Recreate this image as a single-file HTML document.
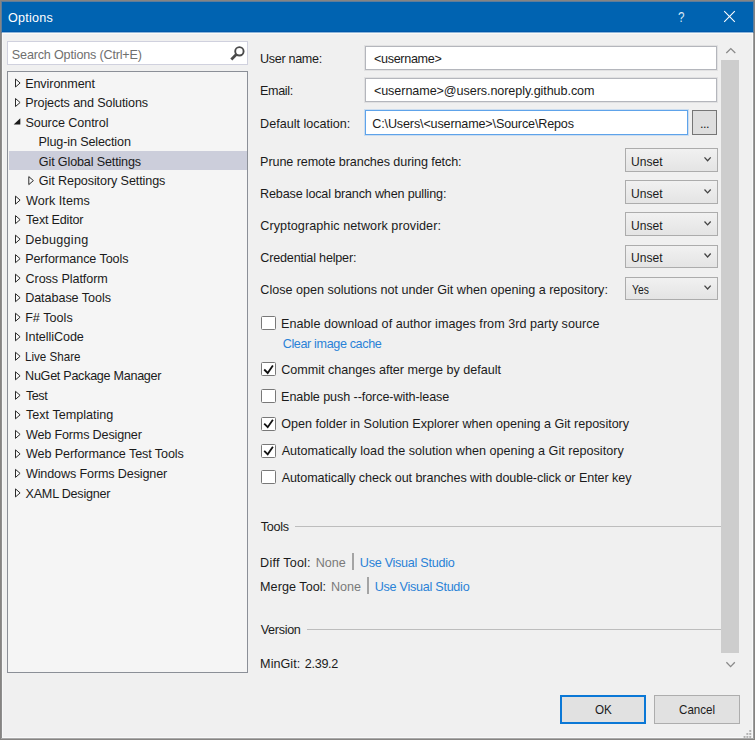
<!DOCTYPE html>
<html lang="en"><head><meta charset="utf-8"><title>Options</title>
<style>

html,body{margin:0;padding:0;}
body{width:755px;height:740px;overflow:hidden;background:#f0f0f0;position:relative;
 font-family:"Liberation Sans",Arial,sans-serif;}
.abs,.t{position:absolute;}
.t{white-space:pre;display:block;}
.win{left:0;top:0;width:755px;height:740px;box-sizing:border-box;}
.b{position:absolute;box-sizing:border-box;}
svg{position:absolute;overflow:visible;}

</style></head><body>
<div class="b" style="left:0;top:0;width:755px;height:740px;background:#868482"></div>
<div class="b" style="left:1px;top:1px;width:753px;height:738px;background:#8e8e8e"></div>
<div class="b" style="left:2px;top:2px;width:751px;height:736px;background:#f8f8f8"></div>
<div class="b" style="left:3px;top:2px;width:749px;height:735px;background:#f0f0f0"></div>
<div class="b" style="left:1px;top:738px;width:753px;height:1px;background:#a9a9a9"></div>
<div class="b" style="left:753px;top:33px;width:1px;height:705px;background:#9c9c9c"></div>
<div class="b" style="left:1px;top:1px;width:753px;height:32px;background:#5f7d9b"></div>
<div class="b" style="left:2px;top:2px;width:751px;height:29px;background:#0063b1"></div>
<div class="b" style="left:2px;top:31px;width:751px;height:1px;background:#0058aa"></div>
<div class="b" style="left:2px;top:32px;width:751px;height:1px;background:#8db6db"></div>
<div class="b" style="left:2px;top:33px;width:751px;height:1px;background:#fcf9f6"></div>
<svg style="left:724px;top:11px" width="11" height="11" viewBox="0 0 11 11"><path d="M0.2 0.2 L10.8 10.8 M10.8 0.2 L0.2 10.8" stroke="#fff" stroke-width="1.05" fill="none"/></svg>
<div class="b" style="left:7px;top:41px;width:241px;height:24px;background:#fff;border:1px solid #d0d1de"></div>
<svg style="left:229px;top:45px" width="17" height="17" viewBox="0 0 17 17"><circle cx="10.4" cy="6.3" r="4.2" fill="none" stroke="#4a4a4a" stroke-width="1.9"/><path d="M7.5 9.3 L2.3 14.5" stroke="#4a4a4a" stroke-width="2.8" fill="none" stroke-linecap="butt"/></svg>
<div class="b" style="left:7px;top:71px;width:241px;height:602px;background:#f5f5f5;border:1px solid #8b8f97"></div>
<div class="b" style="left:9px;top:151px;width:238px;height:19px;background:#cccedb"></div>
<svg style="left:0;top:0" width="755" height="740"><path d="M15.50 79.00 L20.10 83.00 L15.50 87.00 Z" fill="#fbfbfb" stroke="#2b2b2b" stroke-width="1"/></svg>
<svg style="left:0;top:0" width="755" height="740"><path d="M15.50 98.52 L20.10 102.52 L15.50 106.52 Z" fill="#fbfbfb" stroke="#2b2b2b" stroke-width="1"/></svg>
<svg style="left:0;top:0" width="755" height="740"><path d="M20.30 118.14 L20.30 124.54 L13.70 124.54 Z" fill="#1b1b1b"/></svg>
<svg style="left:0;top:0" width="755" height="740"><path d="M28.80 176.60 L33.40 180.60 L28.80 184.60 Z" fill="#fbfbfb" stroke="#2b2b2b" stroke-width="1"/></svg>
<svg style="left:0;top:0" width="755" height="740"><path d="M15.50 196.12 L20.10 200.12 L15.50 204.12 Z" fill="#fbfbfb" stroke="#2b2b2b" stroke-width="1"/></svg>
<svg style="left:0;top:0" width="755" height="740"><path d="M15.50 215.64 L20.10 219.64 L15.50 223.64 Z" fill="#fbfbfb" stroke="#2b2b2b" stroke-width="1"/></svg>
<svg style="left:0;top:0" width="755" height="740"><path d="M15.50 235.16 L20.10 239.16 L15.50 243.16 Z" fill="#fbfbfb" stroke="#2b2b2b" stroke-width="1"/></svg>
<svg style="left:0;top:0" width="755" height="740"><path d="M15.50 254.68 L20.10 258.68 L15.50 262.68 Z" fill="#fbfbfb" stroke="#2b2b2b" stroke-width="1"/></svg>
<svg style="left:0;top:0" width="755" height="740"><path d="M15.50 274.20 L20.10 278.20 L15.50 282.20 Z" fill="#fbfbfb" stroke="#2b2b2b" stroke-width="1"/></svg>
<svg style="left:0;top:0" width="755" height="740"><path d="M15.50 293.72 L20.10 297.72 L15.50 301.72 Z" fill="#fbfbfb" stroke="#2b2b2b" stroke-width="1"/></svg>
<svg style="left:0;top:0" width="755" height="740"><path d="M15.50 313.24 L20.10 317.24 L15.50 321.24 Z" fill="#fbfbfb" stroke="#2b2b2b" stroke-width="1"/></svg>
<svg style="left:0;top:0" width="755" height="740"><path d="M15.50 332.76 L20.10 336.76 L15.50 340.76 Z" fill="#fbfbfb" stroke="#2b2b2b" stroke-width="1"/></svg>
<svg style="left:0;top:0" width="755" height="740"><path d="M15.50 352.28 L20.10 356.28 L15.50 360.28 Z" fill="#fbfbfb" stroke="#2b2b2b" stroke-width="1"/></svg>
<svg style="left:0;top:0" width="755" height="740"><path d="M15.50 371.80 L20.10 375.80 L15.50 379.80 Z" fill="#fbfbfb" stroke="#2b2b2b" stroke-width="1"/></svg>
<svg style="left:0;top:0" width="755" height="740"><path d="M15.50 391.32 L20.10 395.32 L15.50 399.32 Z" fill="#fbfbfb" stroke="#2b2b2b" stroke-width="1"/></svg>
<svg style="left:0;top:0" width="755" height="740"><path d="M15.50 410.84 L20.10 414.84 L15.50 418.84 Z" fill="#fbfbfb" stroke="#2b2b2b" stroke-width="1"/></svg>
<svg style="left:0;top:0" width="755" height="740"><path d="M15.50 430.36 L20.10 434.36 L15.50 438.36 Z" fill="#fbfbfb" stroke="#2b2b2b" stroke-width="1"/></svg>
<svg style="left:0;top:0" width="755" height="740"><path d="M15.50 449.88 L20.10 453.88 L15.50 457.88 Z" fill="#fbfbfb" stroke="#2b2b2b" stroke-width="1"/></svg>
<svg style="left:0;top:0" width="755" height="740"><path d="M15.50 469.40 L20.10 473.40 L15.50 477.40 Z" fill="#fbfbfb" stroke="#2b2b2b" stroke-width="1"/></svg>
<svg style="left:0;top:0" width="755" height="740"><path d="M15.50 488.92 L20.10 492.92 L15.50 496.92 Z" fill="#fbfbfb" stroke="#2b2b2b" stroke-width="1"/></svg>
<div class="b" style="left:365px;top:46px;width:352px;height:24px;background:#fff;border:1px solid #b4b6bc;box-shadow:0 0 0 1px rgba(171,173,179,0.22)"></div>
<div class="b" style="left:365px;top:78px;width:352px;height:24px;background:#fff;border:1px solid #b4b6bc;box-shadow:0 0 0 1px rgba(171,173,179,0.22)"></div>
<div class="b" style="left:365px;top:110px;width:323px;height:25px;background:#fff;border:1px solid #5ea3ea;box-shadow:0 0 0 1px rgba(94,163,234,0.25)"></div>
<div class="b" style="left:692px;top:110px;width:25px;height:25px;background:#dedede;border:1px solid #767676"></div>
<div class="b" style="left:625px;top:148px;width:93px;height:24px;background:linear-gradient(#f1f1f1,#e4e4e4);border:1px solid #acacac"></div>
<svg style="left:0;top:0" width="755" height="740"><path d="M704.5 157.40 L707.6 160.80 L710.7 157.40" fill="none" stroke="#444" stroke-width="1.3"/></svg>
<div class="b" style="left:625px;top:180px;width:93px;height:24px;background:linear-gradient(#f1f1f1,#e4e4e4);border:1px solid #acacac"></div>
<svg style="left:0;top:0" width="755" height="740"><path d="M704.5 189.45 L707.6 192.85 L710.7 189.45" fill="none" stroke="#444" stroke-width="1.3"/></svg>
<div class="b" style="left:625px;top:212px;width:93px;height:24px;background:linear-gradient(#f1f1f1,#e4e4e4);border:1px solid #acacac"></div>
<svg style="left:0;top:0" width="755" height="740"><path d="M704.5 221.50 L707.6 224.90 L710.7 221.50" fill="none" stroke="#444" stroke-width="1.3"/></svg>
<div class="b" style="left:625px;top:245px;width:93px;height:23px;background:linear-gradient(#f1f1f1,#e4e4e4);border:1px solid #acacac"></div>
<svg style="left:0;top:0" width="755" height="740"><path d="M704.5 253.55 L707.6 256.95 L710.7 253.55" fill="none" stroke="#444" stroke-width="1.3"/></svg>
<div class="b" style="left:625px;top:277px;width:93px;height:23px;background:linear-gradient(#f1f1f1,#e4e4e4);border:1px solid #acacac"></div>
<svg style="left:0;top:0" width="755" height="740"><path d="M704.5 285.60 L707.6 289.00 L710.7 285.60" fill="none" stroke="#444" stroke-width="1.3"/></svg>
<div class="b" style="left:261.3px;top:316.2px;width:14.4px;height:14px;background:#fff;border:1px solid #787878;border-radius:1.5px"></div>
<div class="b" style="left:261.3px;top:362.3px;width:14.4px;height:14px;background:#fff;border:1px solid #787878;border-radius:1.5px"></div>
<svg style="left:0;top:0" width="755" height="740"><path d="M264.2 369.50 L267.7 373.00 L272.9 365.50" fill="none" stroke="#111" stroke-width="1.8"/></svg>
<div class="b" style="left:261.3px;top:389.4px;width:14.4px;height:14px;background:#fff;border:1px solid #787878;border-radius:1.5px"></div>
<div class="b" style="left:261.3px;top:416.5px;width:14.4px;height:14px;background:#fff;border:1px solid #787878;border-radius:1.5px"></div>
<svg style="left:0;top:0" width="755" height="740"><path d="M264.2 423.70 L267.7 427.20 L272.9 419.70" fill="none" stroke="#111" stroke-width="1.8"/></svg>
<div class="b" style="left:261.3px;top:443.6px;width:14.4px;height:14px;background:#fff;border:1px solid #787878;border-radius:1.5px"></div>
<svg style="left:0;top:0" width="755" height="740"><path d="M264.2 450.80 L267.7 454.30 L272.9 446.80" fill="none" stroke="#111" stroke-width="1.8"/></svg>
<div class="b" style="left:261.3px;top:470.3px;width:14.4px;height:14px;background:#fff;border:1px solid #787878;border-radius:1.5px"></div>
<div class="b" style="left:295.3px;top:525.6px;width:426px;height:1px;background:#bdbdbd"></div>
<div class="b" style="left:307px;top:629px;width:414.3px;height:1px;background:#bdbdbd"></div>
<div class="b" style="left:352px;top:553px;width:2px;height:17px;background:#a4a4a4"></div>
<div class="b" style="left:367px;top:577px;width:2px;height:17px;background:#a4a4a4"></div>
<div class="b" style="left:721.3px;top:59.8px;width:18px;height:593.2px;background:#cdcdcd"></div>
<svg style="left:0;top:0" width="755" height="740"><path d="M726.3 53.0 L730.8 48.6 L735.3 53.0" fill="none" stroke="#8a8a8a" stroke-width="1.3"/><path d="M726.4 662.2 L730.6 666.6 L734.8 662.2" fill="none" stroke="#8a8a8a" stroke-width="1.3"/></svg>
<div class="b" style="left:560.3px;top:694.5px;width:85.7px;height:29.4px;background:#e1e1e1;border:2px solid #0b78d6"></div>
<div class="b" style="left:654.2px;top:694.5px;width:86px;height:29.4px;background:#e1e1e1;border:1px solid #adadad"></div>
<svg style="left:0;top:0" width="755" height="740"><rect x="749.3" y="730" width="1.9" height="1.9" fill="#b0b0b0"/><rect x="746.4" y="733" width="1.9" height="1.9" fill="#b0b0b0"/><rect x="749.3" y="733" width="1.9" height="1.9" fill="#b0b0b0"/><rect x="743.6" y="736" width="1.9" height="1.9" fill="#b0b0b0"/><rect x="746.4" y="736" width="1.9" height="1.9" fill="#b0b0b0"/><rect x="749.3" y="736" width="1.9" height="1.9" fill="#b0b0b0"/></svg>
<span class="t" id="t0" style="left:8.05px;top:11.00px;font-size:12.6px;line-height:14px;color:#ffffff;letter-spacing:0.220px">Options</span>
<span class="t" id="t1" style="left:677.69px;top:8.00px;font-size:15.2px;line-height:17px;color:#dbe9f5;letter-spacing:0.000px;transform:scaleX(0.768);transform-origin:0 0">?</span>
<span class="t" id="t2" style="left:11.84px;top:48.00px;font-size:12.6px;line-height:14px;color:#6f6f6f;letter-spacing:-0.177px">Search Options (Ctrl+E)</span>
<span class="t" id="t3" style="left:25.13px;top:77.00px;font-size:12.6px;line-height:14px;color:#1b1b1b;letter-spacing:-0.078px">Environment</span>
<span class="t" id="t4" style="left:25.13px;top:96.00px;font-size:12.6px;line-height:14px;color:#1b1b1b;letter-spacing:-0.109px">Projects and Solutions</span>
<span class="t" id="t5" style="left:25.42px;top:116.00px;font-size:12.6px;line-height:14px;color:#1b1b1b;letter-spacing:-0.075px">Source Control</span>
<span class="t" id="t6" style="left:38.50px;top:135.00px;font-size:12.6px;line-height:14px;color:#1b1b1b;letter-spacing:-0.133px">Plug-in Selection</span>
<span class="t" id="t7" style="left:38.86px;top:155.00px;font-size:12.6px;line-height:14px;color:#1b1b1b;letter-spacing:-0.152px">Git Global Settings</span>
<span class="t" id="t8" style="left:38.86px;top:174.00px;font-size:12.6px;line-height:14px;color:#1b1b1b;letter-spacing:-0.104px">Git Repository Settings</span>
<span class="t" id="t9" style="left:25.94px;top:194.00px;font-size:12.6px;line-height:14px;color:#1b1b1b;letter-spacing:0.046px">Work Items</span>
<span class="t" id="t10" style="left:26.00px;top:213.00px;font-size:12.6px;line-height:14px;color:#1b1b1b;letter-spacing:-0.201px">Text Editor</span>
<span class="t" id="t11" style="left:25.13px;top:233.00px;font-size:12.6px;line-height:14px;color:#1b1b1b;letter-spacing:0.271px">Debugging</span>
<span class="t" id="t12" style="left:25.13px;top:252.00px;font-size:12.6px;line-height:14px;color:#1b1b1b;letter-spacing:-0.086px">Performance Tools</span>
<span class="t" id="t13" style="left:25.59px;top:272.00px;font-size:12.6px;line-height:14px;color:#1b1b1b;letter-spacing:-0.085px">Cross Platform</span>
<span class="t" id="t14" style="left:25.13px;top:291.00px;font-size:12.6px;line-height:14px;color:#1b1b1b;letter-spacing:-0.059px">Database Tools</span>
<span class="t" id="t15" style="left:25.13px;top:311.00px;font-size:12.6px;line-height:14px;color:#1b1b1b;letter-spacing:0.035px">F# Tools</span>
<span class="t" id="t16" style="left:25.08px;top:330.00px;font-size:12.6px;line-height:14px;color:#1b1b1b;letter-spacing:-0.077px">IntelliCode</span>
<span class="t" id="t17" style="left:25.35px;top:350.00px;font-size:12.6px;line-height:14px;color:#1b1b1b;letter-spacing:0.000px;transform:scaleX(0.922);transform-origin:0 0">Live Share</span>
<span class="t" id="t18" style="left:25.10px;top:369.00px;font-size:12.6px;line-height:14px;color:#1b1b1b;letter-spacing:-0.285px">NuGet Package Manager</span>
<span class="t" id="t19" style="left:26.00px;top:389.00px;font-size:12.6px;line-height:14px;color:#1b1b1b;letter-spacing:-0.478px">Test</span>
<span class="t" id="t20" style="left:26.00px;top:408.00px;font-size:12.6px;line-height:14px;color:#1b1b1b;letter-spacing:0.005px">Text Templating</span>
<span class="t" id="t21" style="left:25.94px;top:428.00px;font-size:12.6px;line-height:14px;color:#1b1b1b;letter-spacing:-0.166px">Web Forms Designer</span>
<span class="t" id="t22" style="left:25.94px;top:447.00px;font-size:12.6px;line-height:14px;color:#1b1b1b;letter-spacing:-0.096px">Web Performance Test Tools</span>
<span class="t" id="t23" style="left:25.94px;top:467.00px;font-size:12.6px;line-height:14px;color:#1b1b1b;letter-spacing:-0.133px">Windows Forms Designer</span>
<span class="t" id="t24" style="left:25.52px;top:487.00px;font-size:12.6px;line-height:14px;color:#1b1b1b;letter-spacing:-0.225px">XAML Designer</span>
<span class="t" id="t25" style="left:260.05px;top:52.00px;font-size:12.6px;line-height:14px;color:#1b1b1b;letter-spacing:-0.329px">User name:</span>
<span class="t" id="t26" style="left:260.10px;top:84.00px;font-size:12.6px;line-height:14px;color:#1b1b1b;letter-spacing:-0.387px">Email:</span>
<span class="t" id="t27" style="left:260.10px;top:117.00px;font-size:12.6px;line-height:14px;color:#1b1b1b;letter-spacing:-0.006px">Default location:</span>
<span class="t" id="t28" style="left:373.93px;top:52.00px;font-size:12.6px;line-height:14px;color:#1b1b1b;letter-spacing:-0.313px">&lt;username&gt;</span>
<span class="t" id="t29" style="left:373.93px;top:84.00px;font-size:12.6px;line-height:14px;color:#1b1b1b;letter-spacing:-0.078px">&lt;username&gt;@users.noreply.github.com</span>
<span class="t" id="t30" style="left:372.30px;top:117.00px;font-size:12.6px;line-height:14px;color:#1b1b1b;letter-spacing:-0.154px">C:\Users\&lt;username&gt;\Source\Repos</span>
<span class="t" id="t31" style="left:700.08px;top:117.00px;font-size:12.6px;line-height:14px;color:#1b1b1b;letter-spacing:-0.486px">...</span>
<span class="t" id="t32" style="left:260.10px;top:155.00px;font-size:12.6px;line-height:14px;color:#1b1b1b;letter-spacing:-0.085px">Prune remote branches during fetch:</span>
<span class="t" id="t33" style="left:260.10px;top:187.00px;font-size:12.6px;line-height:14px;color:#1b1b1b;letter-spacing:-0.173px">Rebase local branch when pulling:</span>
<span class="t" id="t34" style="left:260.30px;top:219.00px;font-size:12.6px;line-height:14px;color:#1b1b1b;letter-spacing:0.071px">Cryptographic network provider:</span>
<span class="t" id="t35" style="left:260.30px;top:251.00px;font-size:12.6px;line-height:14px;color:#1b1b1b;letter-spacing:-0.194px">Credential helper:</span>
<span class="t" id="t36" style="left:260.30px;top:283.00px;font-size:12.6px;line-height:14px;color:#1b1b1b;letter-spacing:-0.006px">Close open solutions not under Git when opening a repository:</span>
<span class="t" id="t37" style="left:631.14px;top:155.00px;font-size:12.6px;line-height:14px;color:#1b1b1b;letter-spacing:0.000px;transform:scaleX(0.958);transform-origin:0 0">Unset</span>
<span class="t" id="t38" style="left:631.14px;top:187.00px;font-size:12.6px;line-height:14px;color:#1b1b1b;letter-spacing:0.000px;transform:scaleX(0.958);transform-origin:0 0">Unset</span>
<span class="t" id="t39" style="left:631.14px;top:219.00px;font-size:12.6px;line-height:14px;color:#1b1b1b;letter-spacing:0.000px;transform:scaleX(0.958);transform-origin:0 0">Unset</span>
<span class="t" id="t40" style="left:631.14px;top:251.00px;font-size:12.6px;line-height:14px;color:#1b1b1b;letter-spacing:0.000px;transform:scaleX(0.958);transform-origin:0 0">Unset</span>
<span class="t" id="t41" style="left:632.10px;top:283.00px;font-size:12.6px;line-height:14px;color:#1b1b1b;letter-spacing:0.000px;transform:scaleX(0.821);transform-origin:0 0">Yes</span>
<span class="t" id="t42" style="left:281.10px;top:317.00px;font-size:12.6px;line-height:14px;color:#1b1b1b;letter-spacing:0.025px">Enable download of author images from 3rd party source</span>
<span class="t" id="t43" style="left:282.70px;top:337.00px;font-size:12.6px;line-height:14px;color:#2a82d7;letter-spacing:-0.368px">Clear image cache</span>
<span class="t" id="t44" style="left:281.30px;top:363.00px;font-size:12.6px;line-height:14px;color:#1b1b1b;letter-spacing:-0.023px">Commit changes after merge by default</span>
<span class="t" id="t45" style="left:281.10px;top:390.00px;font-size:12.6px;line-height:14px;color:#1b1b1b;letter-spacing:-0.089px">Enable push --force-with-lease</span>
<span class="t" id="t46" style="left:281.34px;top:417.00px;font-size:12.6px;line-height:14px;color:#1b1b1b;letter-spacing:-0.026px">Open folder in Solution Explorer when opening a Git repository</span>
<span class="t" id="t47" style="left:281.64px;top:444.00px;font-size:12.6px;line-height:14px;color:#1b1b1b;letter-spacing:0.019px">Automatically load the solution when opening a Git repository</span>
<span class="t" id="t48" style="left:281.64px;top:471.00px;font-size:12.6px;line-height:14px;color:#1b1b1b;letter-spacing:-0.082px">Automatically check out branches with double-click or Enter key</span>
<span class="t" id="t49" style="left:260.86px;top:520.00px;font-size:12.6px;line-height:14px;color:#1b1b1b;letter-spacing:-0.326px">Tools</span>
<span class="t" id="t50" style="left:260.10px;top:556.00px;font-size:12.6px;line-height:14px;color:#1b1b1b;letter-spacing:0.221px">Diff Tool:</span>
<span class="t" id="t51" style="left:315.71px;top:556.00px;font-size:12.6px;line-height:14px;color:#7a7a7a;letter-spacing:-0.001px">None</span>
<span class="t" id="t52" style="left:359.86px;top:556.00px;font-size:12.6px;line-height:14px;color:#2a82d7;letter-spacing:-0.273px">Use Visual Studio</span>
<span class="t" id="t53" style="left:260.10px;top:580.00px;font-size:12.6px;line-height:14px;color:#1b1b1b;letter-spacing:0.039px">Merge Tool:</span>
<span class="t" id="t54" style="left:330.88px;top:580.00px;font-size:12.6px;line-height:14px;color:#7a7a7a;letter-spacing:0.026px">None</span>
<span class="t" id="t55" style="left:374.67px;top:580.00px;font-size:12.6px;line-height:14px;color:#2a82d7;letter-spacing:-0.261px">Use Visual Studio</span>
<span class="t" id="t56" style="left:260.64px;top:623.00px;font-size:12.6px;line-height:14px;color:#1b1b1b;letter-spacing:-0.293px">Version</span>
<span class="t" id="t57" style="left:260.10px;top:657.00px;font-size:12.6px;line-height:14px;color:#1b1b1b;letter-spacing:0.046px">MinGit:</span>
<span class="t" id="t58" style="left:304.78px;top:657.00px;font-size:12.6px;line-height:14px;color:#1b1b1b;letter-spacing:-0.297px">2.39.2</span>
<span class="t" id="t59" style="left:594.53px;top:703.00px;font-size:12.6px;line-height:14px;color:#1b1b1b;letter-spacing:0.000px;transform:scaleX(0.928);transform-origin:0 0">OK</span>
<span class="t" id="t60" style="left:679.21px;top:703.00px;font-size:12.6px;line-height:14px;color:#1b1b1b;letter-spacing:0.000px;transform:scaleX(0.921);transform-origin:0 0">Cancel</span>
</body></html>
